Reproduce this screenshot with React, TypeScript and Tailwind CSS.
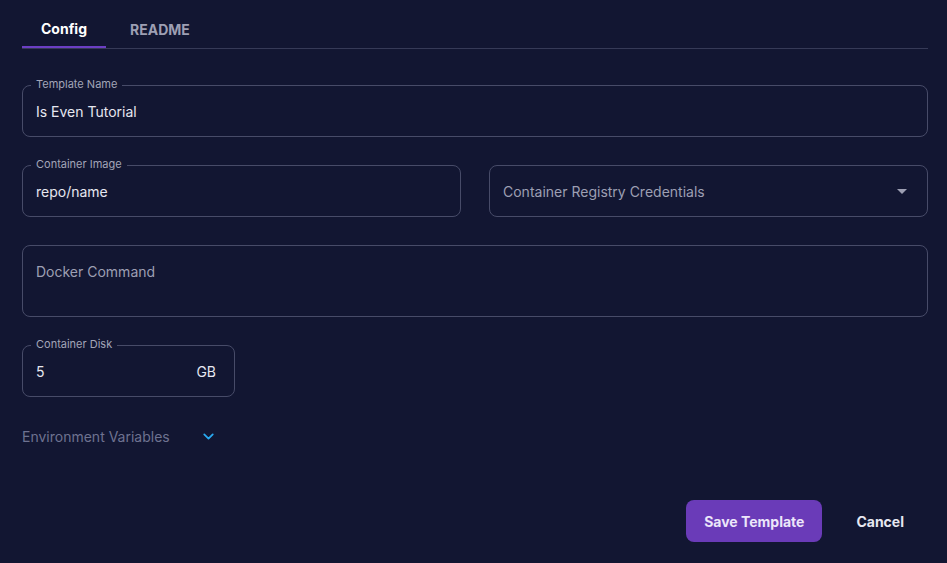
import { ChevronDown } from "lucide-react";

// outlined input with the label sitting on the top border
function OutlinedField({
  label,
  value,
  placeholder,
  suffix,
  className = "",
}: {
  label?: string;
  value?: string;
  placeholder?: string;
  suffix?: string;
  className?: string;
}) {
  return (
    <div
      className={`relative flex items-center rounded-lg border border-[#474b68] px-[13px] h-[52px] ${className}`}
    >
      {label && (
        <span className="absolute -top-[10px] left-[8px] bg-[#121632] px-[5px] text-[11px] leading-[16px] text-[#a3a5b8]">
          {label}
        </span>
      )}
      {value ? (
        <span className="flex-1 text-[14px] text-[#e6e7f0]">{value}</span>
      ) : (
        <span className="flex-1 text-[14px] text-[#9d9fb3]">{placeholder}</span>
      )}
      {suffix && <span className="mr-[5px] text-[14px] text-[#e6e7f0]">{suffix}</span>}
    </div>
  );
}

export default function App() {
  return (
    <div
      className="min-h-[563px] bg-[#121632] pl-[22px] pr-[19px] pt-[9px]"
      style={{ fontFamily: "Inter, 'Noto Sans', sans-serif" }}
    >
      {/* タブ */}
      <div className="flex border-b border-[#363a57]">
        <button className="h-[39px] border-b-2 border-[#6c3fc4] px-[19px] pt-[1px] text-[14px] font-bold text-white">
          Config
        </button>
        <button className="h-[39px] px-[24px] pt-[1px] text-[14px] font-bold text-[#9d9fb3]">README</button>
      </div>

      <div className="mt-[36px] flex flex-col gap-[28px]">
        <OutlinedField label="Template Name" value="Is Even Tutorial" />

        <div className="grid grid-cols-2 gap-[28px]">
          <OutlinedField label="Container Image" value="repo/name" />
          <div className="flex h-[52px] items-center rounded-lg border border-[#474b68] px-[13px]">
            <span className="flex-1 text-[14px] text-[#9d9fb3]">Container Registry Credentials</span>
            <svg width="10" height="5" viewBox="0 0 10 5" className="mr-[7px]">
              <path d="M0 0h10L5 5z" fill="#9d9fb3" />
            </svg>
          </div>
        </div>

        <div className="h-[72px] rounded-lg border border-[#474b68] px-[13px] pt-[13px]">
          <span className="text-[14px] text-[#9d9fb3]">Docker Command</span>
        </div>

        <OutlinedField label="Container Disk" value="5" suffix="GB" className="w-[213px]" />
      </div>

      {/* 環境変数 */}
      <div className="mt-[29px] flex items-center gap-[30px]">
        <span className="text-[14px] text-[#6e7290]">Environment Variables</span>
        <ChevronDown className="h-[17px] w-[17px] text-[#29a9f0]" strokeWidth={2.5} />
      </div>

      <div className="mt-[53px] flex justify-end gap-[14px] pr-[4px]">
        <button className="h-[42px] rounded-lg bg-[#6a3bb8] px-[18px] text-[14px] font-bold text-[#ece6fa]">
          Save Template
        </button>
        <button className="h-[42px] px-5 text-[14px] font-bold text-[#e6e7f0]">Cancel</button>
      </div>
    </div>
  );
}
